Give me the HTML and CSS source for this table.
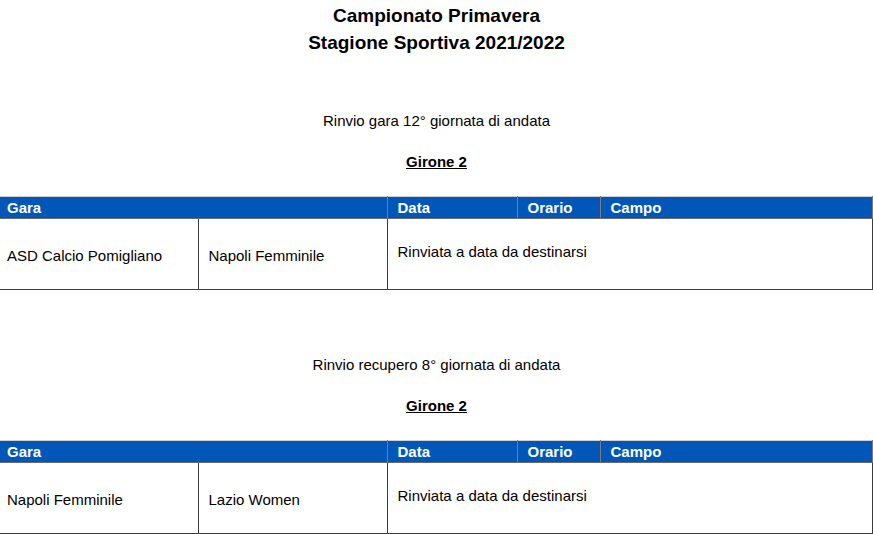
FILE: index.html
```html
<!DOCTYPE html>
<html lang="it">
<head>
<meta charset="utf-8">
<title>Campionato Primavera</title>
<link rel="stylesheet" href="styles.css">
</head>
<body>
<h1 class="title">Campionato Primavera<br>Stagione Sportiva 2021/2022</h1>

<section class="round">
  <p class="subtitle">Rinvio gara 12° giornata di andata</p>
  <p class="group">Girone 2</p>
  <table class="games">
    <colgroup>
      <col class="c-home"><col class="c-away"><col class="c-date"><col class="c-time"><col class="c-field">
    </colgroup>
    <thead>
      <tr><th colspan="2">Gara</th><th>Data</th><th>Orario</th><th>Campo</th></tr>
    </thead>
    <tbody>
      <tr>
        <td>ASD Calcio Pomigliano</td>
        <td>Napoli Femminile</td>
        <td colspan="3" class="note">Rinviata a data da destinarsi</td>
      </tr>
    </tbody>
  </table>
</section>

<section class="round">
  <p class="subtitle">Rinvio recupero 8° giornata di andata</p>
  <p class="group">Girone 2</p>
  <table class="games">
    <colgroup>
      <col class="c-home"><col class="c-away"><col class="c-date"><col class="c-time"><col class="c-field">
    </colgroup>
    <thead>
      <tr><th colspan="2">Gara</th><th>Data</th><th>Orario</th><th>Campo</th></tr>
    </thead>
    <tbody>
      <tr>
        <td>Napoli Femminile</td>
        <td>Lazio Women</td>
        <td colspan="3" class="note">Rinviata a data da destinarsi</td>
      </tr>
    </tbody>
  </table>
</section>
</body>
</html>
```

FILE: styles.css
```css
html, body {
  margin: 0;
  padding: 0;
  background: #fff;
}
body {
  font-family: "Liberation Sans", Arial, sans-serif;
  font-size: 15px;
  color: #000;
  width: 873px;
}
.title {
  margin: 0;
  padding-top: 2px;
  font-size: 19px;
  font-weight: bold;
  line-height: 27px;
  text-align: center;
}
.round {
  margin-top: 56px;
}
.round + .round {
  margin-top: 66px;
}
.subtitle {
  margin: 0;
  line-height: 18px;
  text-align: center;
}
.group {
  margin: 23px 0 0;
  line-height: 18px;
  font-weight: bold;
  text-align: center;
  text-decoration: underline;
}
.games {
  margin-top: 25px;
  width: 873px;
  table-layout: fixed;
  border-collapse: collapse;
}
.c-home { width: 198px; }
.c-away { width: 189px; }
.c-date { width: 130px; }
.c-time { width: 83px; }
.c-field { width: auto; }
.games th {
  background: #0057b7;
  color: #fff;
  font-weight: bold;
  text-align: left;
  height: 22px;
  padding: 0 0 0 10px;
  line-height: 18px;
  border-top: 1px solid #d0d0d0;
  border-left: 1px solid #7a7a7a;
  border-right: 1px solid #7a7a7a;
  border-bottom: 1px solid #6a6a6a;
  box-sizing: border-box;
}
.games th:first-child {
  border-left: 0;
  padding-left: 7px;
}
.games td {
  height: 71px;
  padding: 3px 0 0 10px;
  border: 1px solid #3c3c3c;
  vertical-align: middle;
  line-height: 18px;
  box-sizing: border-box;
}
.games td:first-child {
  border-left: 0;
  padding-left: 7px;
}
.games td.note {
  padding-bottom: 8px;
}
```
